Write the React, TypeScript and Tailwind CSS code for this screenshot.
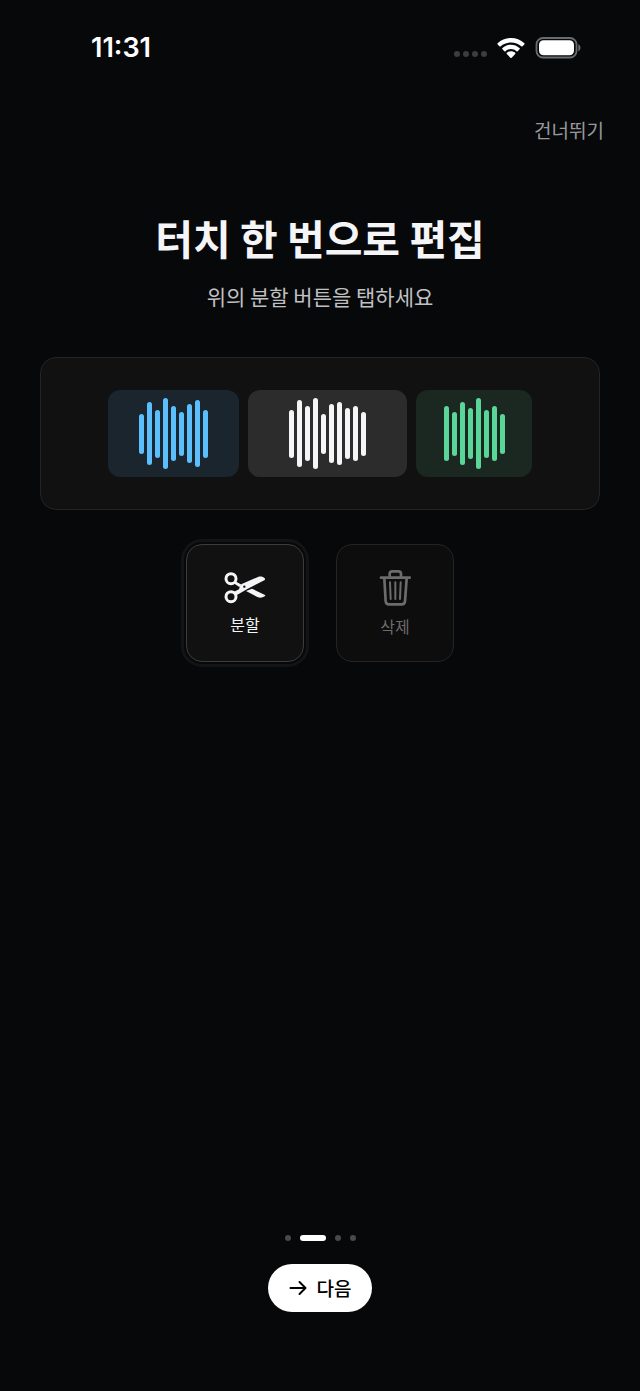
import { clsx } from "clsx"

const clips = [
  {
    name: "blue",
    box: "w-[131px] bg-[#1a252e]",
    bar: "bg-[#5abffc]",
    levels: [40, 63, 48, 71, 55, 44, 59, 67, 48],
  },
  {
    name: "white",
    box: "w-[159px] bg-[#2c2c2c]",
    bar: "bg-[#f5f5f7]",
    levels: [48, 67, 55, 71, 40, 59, 63, 51, 55, 44],
  },
  {
    name: "green",
    box: "w-[116px] bg-[#1b2821]",
    bar: "bg-[#5bd699]",
    levels: [55, 44, 63, 51, 71, 48, 55, 40],
  },
]

const steps = [1, 2, 3, 4]
const currentStep = 2

function StatusBar() {
  return (
    <div className="flex h-24 items-center justify-between pl-[91px] pr-[59px]">
      <span className="font-['Inter',sans-serif] text-[27px] leading-8 font-semibold text-white">11:31</span>
      <div className="flex items-center gap-[10px]">
        <div className="flex gap-[3px] pt-3">
          {steps.map((n) => (
            <span key={n} className="size-[6px] rounded-full bg-[#3c3d3f]" />
          ))}
        </div>
        <svg viewBox="0 0 84 63" className="h-[21px] w-7" fill="#fff">
          <path d="M42 0C57 0 71 5.500 82 15.500q2 2 0 4L76.500 25q-1.800 1.700-3.700 0C65 18 54 13.500 42 13.500S19 18 11.200 25q-1.900 1.700-3.700 0L2 19.500q-2-2 0-4C13 5.500 27 0 42 0z" />
          <path d="M42 20c9.500 0 18.500 3.500 25.500 10q2 2 0 4L62 39.500q-1.800 1.700-3.700 0C54 35.500 48.500 33 42 33s-12 2.500-16.300 6.500q-1.900 1.700-3.700 0L16.500 34q-2-2 0-4c7-6.500 16-10 25.500-10z" />
          <path d="M42 39.500c4.500 0 9 1.500 12.500 4.500q1.800 2 0 4L44 59q-2 2-4 0L29.500 48q-1.800-2 0-4c3.500-3 8-4.500 12.500-4.500z" />
        </svg>
        <svg viewBox="0 0 46 22" className="h-[22px] w-[46px]">
          <rect x="1.500" y="1" width="40" height="19.500" rx="6.500" fill="none" stroke="#6b6c6e" strokeWidth="1.800" />
          <rect x="4" y="3.300" width="35" height="15" rx="4.500" fill="#fff" />
          <path d="M43.300 7.200c2.800.8 2.800 6.200 0 7z" fill="#6b6c6e" />
        </svg>
      </div>
    </div>
  )
}

function ScissorsIcon() {
  return (
    <svg viewBox="160 121 126 99" className="h-[33px] w-[42px]" fill="none">
      <g stroke="#f5f5f7" strokeWidth="9">
        <circle cx="181" cy="144" r="15" />
        <circle cx="181" cy="198" r="15" />
      </g>
      <path d="M194 152L213 162L206 169L189 158z" fill="#f5f5f7" />
      <path d="M226 181L244 174L283 193Q285 195 282 197C275 202 268 203 260 199z" fill="#f5f5f7" />
      <path d="M189 184L205 176Q208 160 220 157L262 139C270 136 277 138 282 143Q285 146 281 149L230 175L195 195z" fill="#f5f5f7" />
      <circle cx="221" cy="168" r="3.500" fill="#111" />
    </svg>
  )
}

function TrashIcon() {
  return (
    <svg
      viewBox="163 117 99 111"
      className="h-[37px] w-[33px]"
      fill="none"
      stroke="#6c6c6c"
      strokeWidth="8"
      strokeLinecap="round"
      strokeLinejoin="round"
    >
      <path d="M169 143H255" />
      <path d="M195 141V131Q195 124 203 124H221Q229 124 229 131V141" />
      <path d="M179 145L183 214Q184 223 193 223H231Q240 223 241 214L246 145" />
      <path d="M196 157L198 207M212 157V207M228 157L226 207" strokeWidth="6" />
    </svg>
  )
}

function Waveforms() {
  return (
    <div className="flex justify-center gap-[9px] rounded-2xl border border-[#242424] bg-[#111111] py-8">
      {clips.map((clip) => (
        <div
          key={clip.name}
          className={clsx("flex h-[87px] items-center justify-center gap-[3px] rounded-xl", clip.box)}
        >
          {clip.levels.map((level, i) => (
            <span key={i} className={clsx("w-[5px] rounded-full", clip.bar)} style={{ height: level }} />
          ))}
        </div>
      ))}
    </div>
  )
}

export default function App() {
  return (
    <div className="flex min-h-screen flex-col bg-[#07080a] font-['Noto_Sans_CJK_KR',sans-serif]">
      <StatusBar />

      <header className="flex justify-end px-9 pt-5">
        <button type="button" className="text-[19px] leading-7 text-[#98989a]">
          건너뛰기
        </button>
      </header>

      <main className="flex flex-1 flex-col px-10 pt-16">
        <h1 className="text-center text-[41px] leading-[58px] font-bold text-[#f5f5f7]">
          터치 한 번으로 편집
        </h1>
        <p className="mt-4 mb-[47px] text-center text-[21px] leading-7 text-[#c0c0c2]">
          위의 분할 버튼을 탭하세요
        </p>

        <Waveforms />

        <div className="mt-[34px] flex justify-center gap-8">
          <button
            type="button"
            className="flex size-[118px] flex-col items-center justify-center gap-2 rounded-2xl border border-[#3c3c3c] bg-[#111111] text-base leading-6 text-[#f5f5f7] outline-3 outline-offset-2 outline-[#131416]"
          >
            <ScissorsIcon />
            분할
          </button>
          <button
            type="button"
            className="flex size-[118px] flex-col items-center justify-center gap-2 rounded-2xl border border-[#232425] bg-[#0d0d0e] text-base leading-6 text-[#6c6c6c]"
          >
            <TrashIcon />
            삭제
          </button>
        </div>
      </main>

      <footer className="flex flex-col items-center gap-[23px] pb-[79px]">
        <div className="flex gap-[9px]">
          {steps.map((n) => (
            <span
              key={n}
              className={clsx(
                "h-[6px] rounded-full",
                n === currentStep ? "w-[26px] bg-white" : "w-[6px] bg-[#48494b]"
              )}
            />
          ))}
        </div>
        <button
          type="button"
          className="flex h-12 items-center gap-[10px] rounded-full bg-white px-[21px] text-[19px] font-medium text-black"
        >
          <svg
            viewBox="0 0 18 16"
            className="h-4 w-[18px]"
            fill="none"
            stroke="currentColor"
            strokeWidth="2"
            strokeLinecap="round"
            strokeLinejoin="round"
          >
            <path d="M1.500 8H16M10.500 2L16.500 8L10.500 14" />
          </svg>
          다음
        </button>
      </footer>
    </div>
  )
}
